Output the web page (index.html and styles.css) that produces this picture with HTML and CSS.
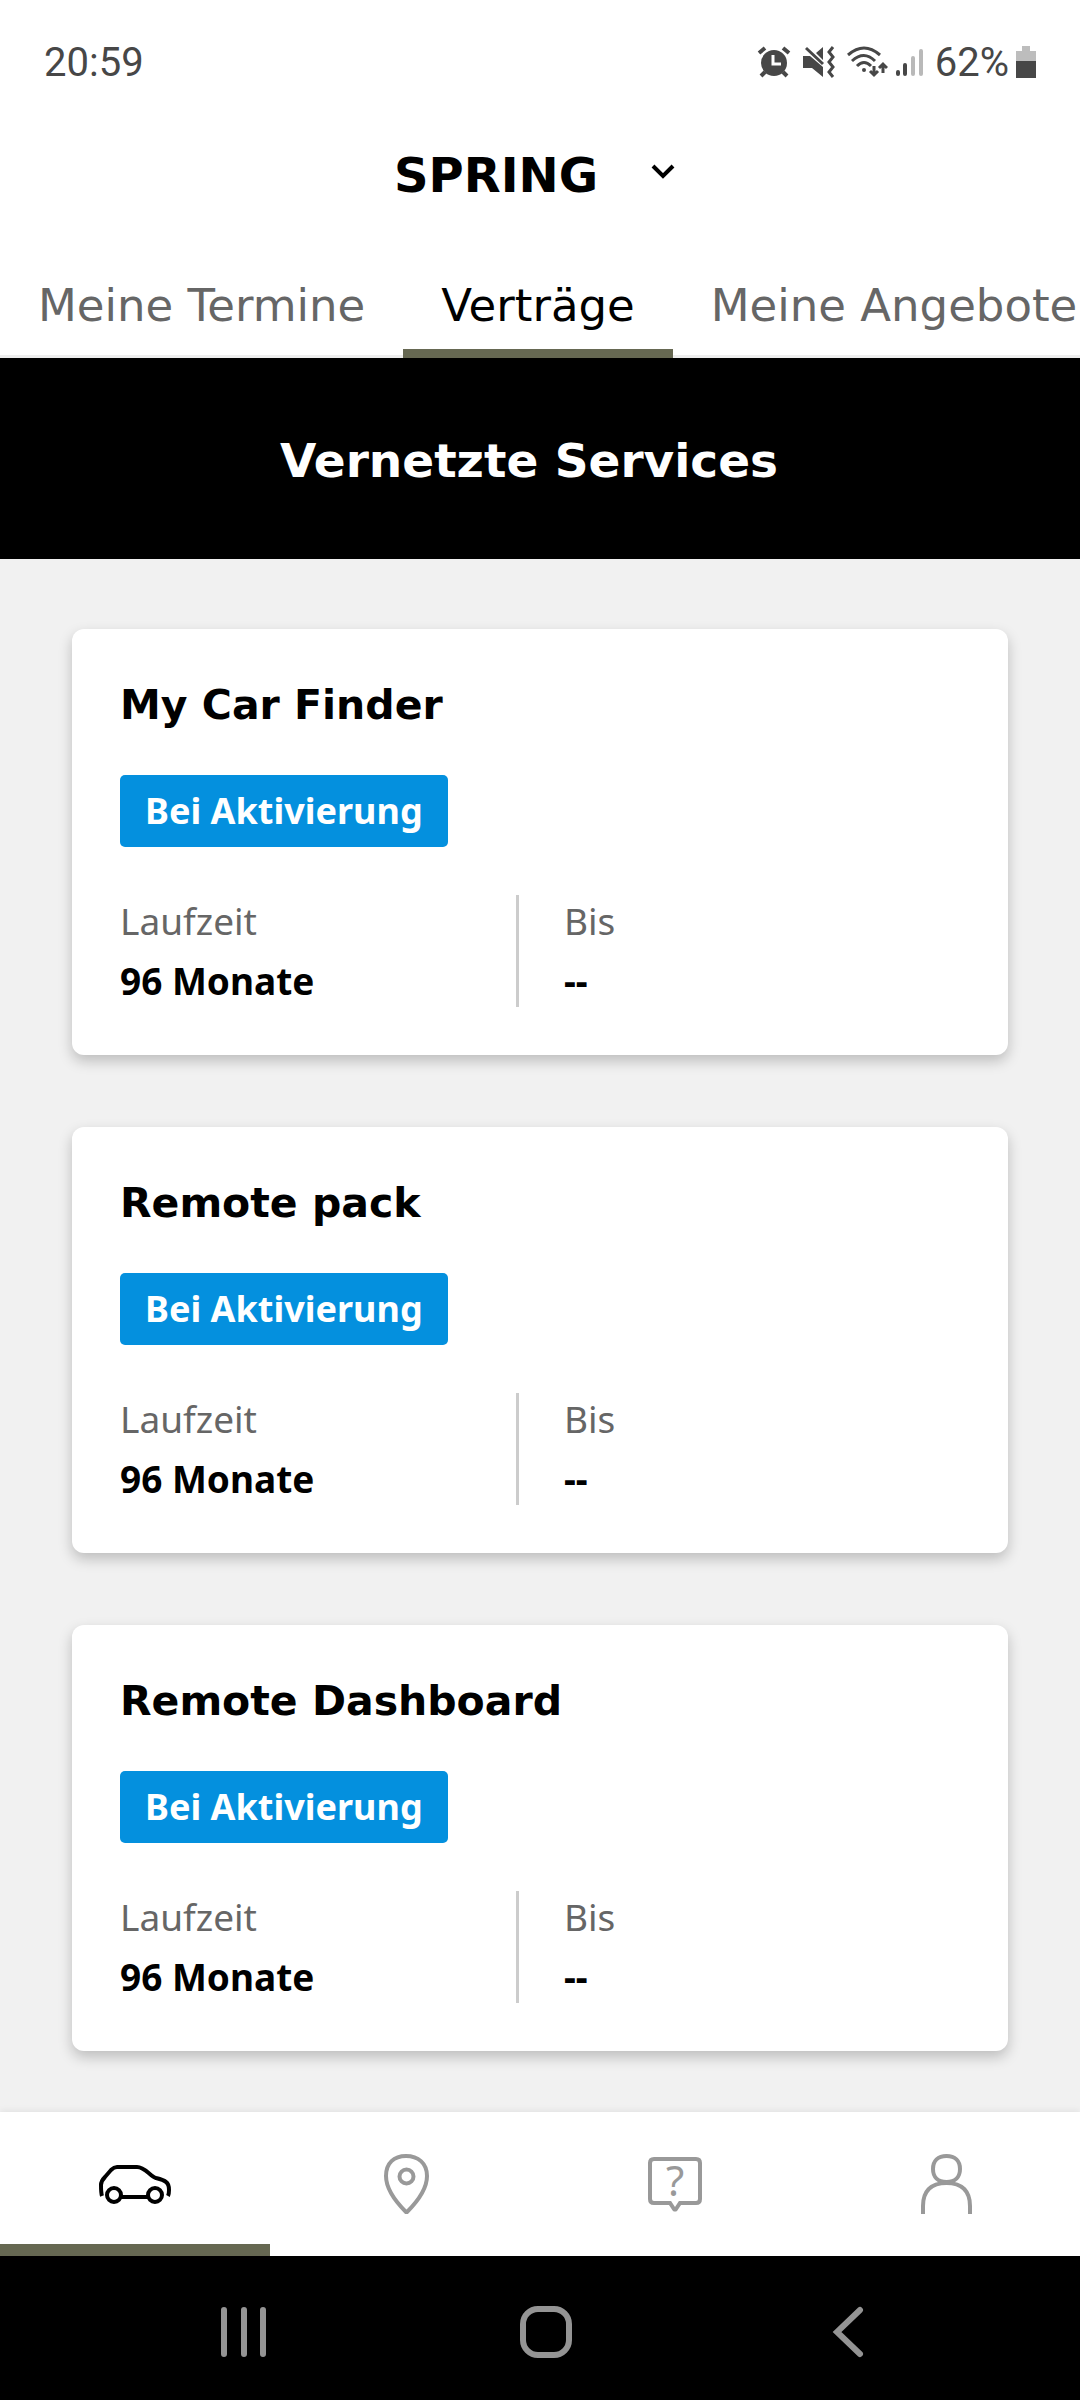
FILE: index.html
```html
<!DOCTYPE html>
<html lang="de">
<head>
    <meta charset="UTF-8">
    <meta name="viewport" content="width=device-width, initial-scale=1.0">
    <title>Verträge</title>
    <link rel="stylesheet" href="styles.css">
</head>
<body>
<div class="status-bar">
    <span>20:59</span>
    <div class="status-icons">
        <svg width="34" height="32" viewBox="0 0 34 32">
            <circle cx="17" cy="17" r="13" fill="#474747"/>
            <path d="M2 7L8 2M32 7L26 2M8 26L4 30M26 26L30 30" stroke="#474747" stroke-width="4" fill="none"/>
            <path d="M16 9V18H24" stroke="#fff" stroke-width="3" fill="none"/>
        </svg>
        <svg class="icon-spaced" width="32" height="32" viewBox="0 0 32 32">
            <path d="M0 10H7L20 21V31L9 22H0ZM13 7L20 1V14Z" fill="#474747"/>
            <path d="M3 2L20 18" stroke="#474747" stroke-width="3"/>
            <path d="M30 1L26 6L30 11L26 16L30 21L26 26L30 31" stroke="#474747" stroke-width="3" fill="none"/>
        </svg>
        <svg class="icon-spaced" width="41" height="32" viewBox="0 0 41 32">
            <path d="M1 9Q17 -5 33 9M5 15Q17 4 28 15M10 20Q17 13 24 20" stroke="#474747" stroke-width="3" fill="none"/>
            <circle cx="17" cy="24" r="2" fill="#474747"/>
            <path d="M27 20V29M23 25L27 29L31 25M36 27V18M32 22L36 18L40 22" stroke="#474747" stroke-width="3" fill="none"/>
        </svg>
        <svg width="28" height="32" viewBox="0 0 28 32" stroke-width="4" stroke-linecap="round">
            <path d="M3 26V28M10 19V28" stroke="#474747"/>
            <path d="M18 12V28M26 5V28" stroke="#b9b9b9"/>
        </svg>
        <span class="icon-spaced">62%</span>
        <svg width="20" height="32" viewBox="0 0 20 32">
            <path d="M6 0H14V5H20V16H0V5H6Z" fill="#bdbdbd"/>
            <path d="M0 15H20V32H0Z" fill="#474747"/>
        </svg>
    </div>
</div>

<header class="header">
    <button class="car-select" type="button">
        SPRING
        <svg width="26" height="26" viewBox="0 0 26 26">
            <path d="M3 4L13 14L23 4" stroke="#000" stroke-width="4" fill="none"/>
        </svg>
    </button>
</header>

<nav class="tabs">
    <a class="tab" href="#termine">Meine Termine</a>
    <a class="tab active" href="#vertraege">Verträge</a>
    <a class="tab" href="#angebote">Meine Angebote</a>
</nav>

<h1 class="banner">Vernetzte Services</h1>

<main class="services">
    <section class="card">
        <h2>My Car Finder</h2>
        <span class="badge">Bei Aktivierung</span>
        <dl class="details">
            <div class="detail">
                <dt>Laufzeit</dt>
                <dd>96 Monate</dd>
            </div>
            <div class="detail">
                <dt>Bis</dt>
                <dd>--</dd>
            </div>
        </dl>
    </section>
    <section class="card">
        <h2>Remote pack</h2>
        <span class="badge">Bei Aktivierung</span>
        <dl class="details">
            <div class="detail">
                <dt>Laufzeit</dt>
                <dd>96 Monate</dd>
            </div>
            <div class="detail">
                <dt>Bis</dt>
                <dd>--</dd>
            </div>
        </dl>
    </section>
    <section class="card">
        <h2>Remote Dashboard</h2>
        <span class="badge">Bei Aktivierung</span>
        <dl class="details">
            <div class="detail">
                <dt>Laufzeit</dt>
                <dd>96 Monate</dd>
            </div>
            <div class="detail">
                <dt>Bis</dt>
                <dd>--</dd>
            </div>
        </dl>
    </section>
</main>

<nav class="bottom-nav">
    <a class="nav-item active" href="#car" aria-label="Fahrzeug">
        <svg width="72" height="72" viewBox="0 0 72 72">
            <path d="M3 48C2 45 2 41 2 37C2 34 4 31 6 29L12 22C14 20 15 19 18 19H38C46 19 51 28 57 30C61 31 65 32 67 34C70 36 70 39 70 42C70 45 70 46 69 48"/>
            <circle cx="15" cy="47" r="7"/>
            <circle cx="56" cy="47" r="7"/>
            <path d="M22 49H49"/>
        </svg>
    </a>
    <a class="nav-item" href="#map" aria-label="Karte">
        <svg width="72" height="72" viewBox="0 0 72 72">
            <path d="M37 64C30 57 17 43 17 28C17 15 25 8 37 8S58 15 58 28C58 43 45 57 38 64Z"/>
            <circle cx="37.5" cy="28.5" r="7"/>
        </svg>
    </a>
    <a class="nav-item" href="#help" aria-label="Hilfe">
        <svg width="72" height="72" viewBox="0 0 72 72">
            <path d="M15 11H57Q61 11 61 15V51Q61 55 57 55H41L37 61Q36 62 35 61L31 55H15Q11 55 11 51V15Q11 11 15 11Z"/>
            <text class="nav-mark" x="36" y="48" text-anchor="middle">?</text>
        </svg>
    </a>
    <a class="nav-item" href="#profile" aria-label="Profil">
        <svg width="72" height="72" viewBox="0 0 72 72">
            <path d="M37.5 8C46 8 51 13 51 21C51 29 46 34 37.5 34S24 29 24 21C24 13 29 8 37.5 8Z"/>
            <path d="M14 66V58C14 44 21 35 37.5 35S61 44 61 58V66"/>
        </svg>
    </a>
</nav>

<div class="system-bar">
    <button type="button" aria-label="Letzte Apps">
        <svg width="52" height="52" viewBox="0 0 52 52">
            <path d="M6 4V48M26 4V48M45 4V48"/>
        </svg>
    </button>
    <button type="button" aria-label="Startseite">
        <svg width="52" height="52" viewBox="0 0 52 52">
            <rect x="3" y="3" width="46" height="46" rx="15"/>
        </svg>
    </button>
    <button type="button" aria-label="Zurück">
        <svg width="52" height="52" viewBox="0 0 52 52">
            <path d="M38 4L15 26L38 48"/>
        </svg>
    </button>
</div>
</body>
</html>
```
FILE: styles.css
```css
* {
    box-sizing: border-box;
}
body {
    margin: 0;
    min-height: 100vh;
    display: flex;
    flex-direction: column;
    font-family: "Noto Sans", "Open Sans", sans-serif;
    background-color: #f1f1f1;
    color: #000;
}
a {
    text-decoration: none;
}
button {
    padding: 0;
    border: none;
    background: none;
    cursor: pointer;
}
.status-bar {
    display: flex;
    justify-content: space-between;
    align-items: center;
    height: 124px;
    padding: 0 44px;
    background-color: #fff;
    color: #474747;
    font-family: Roboto, sans-serif;
    font-size: 40px;
}
.status-icons {
    display: flex;
    align-items: center;
    gap: 7px;
}
.icon-spaced {
    margin-left: 5px;
}
.header {
    display: flex;
    justify-content: center;
    padding: 19px 10px 21px 0;
    background-color: #fff;
}
.car-select {
    display: flex;
    align-items: center;
    gap: 52px;
    color: #000;
    font-family: "DejaVu Sans", sans-serif;
    font-size: 48px;
    font-weight: bold;
    line-height: 64px;
}
.tabs {
    display: flex;
    overflow: hidden;
    background-color: #fff;
    box-shadow: inset 0 -3px #eee;
}
.tab {
    flex: none;
    padding: 50px 38px 16px;
    border-bottom: 9px solid transparent;
    color: #666;
    font-family: "DejaVu Sans", sans-serif;
    font-size: 45px;
    line-height: 55px;
}
.tab.active {
    color: #000;
    border-bottom-color: #666852;
}
.banner {
    margin: 0;
    padding: 71px 22px 66px 0;
    background-color: #000;
    color: #fff;
    font-family: "DejaVu Sans", sans-serif;
    font-size: 47px;
    line-height: 64px;
    text-align: center;
}
.services {
    flex: 1;
    display: flex;
    flex-direction: column;
    gap: 72px;
    padding: 70px 72px 61px;
}
.card {
    padding: 48px;
    background-color: #fff;
    border-radius: 12px;
    box-shadow: 0 6px 14px rgba(0, 0, 0, 0.22);
}
.card h2 {
    margin: 0 0 42px;
    font-family: "DejaVu Sans", sans-serif;
    font-size: 41px;
    line-height: 56px;
}
.badge {
    display: inline-block;
    padding: 0 25px;
    background-color: #0490de;
    border-radius: 5px;
    color: #fff;
    font-size: 36px;
    font-weight: bold;
    line-height: 72px;
    vertical-align: top;
}
.details {
    display: flex;
    margin: 48px 0 0;
}
.detail {
    flex: 1;
    font-size: 37px;
    line-height: 52px;
}
.detail:first-child {
    flex: 0 0 47.5%;
    border-right: 3px solid #ccc;
}
.detail + .detail {
    padding-left: 45px;
}
.detail dt {
    color: #666;
}
.detail dd {
    margin: 8px 0 0;
    font-weight: bold;
}
.bottom-nav {
    display: flex;
    background-color: #fff;
    box-shadow: 0 -2px 6px rgba(0, 0, 0, 0.06);
}
.nav-item {
    flex: 1;
    display: flex;
    justify-content: center;
    padding: 36px 0 24px;
    border-bottom: 12px solid transparent;
}
.nav-item svg {
    fill: none;
    stroke: #999;
    stroke-width: 4;
}
.nav-item.active {
    border-bottom-color: #666852;
}
.nav-item.active svg {
    stroke: #000;
}
.nav-mark {
    fill: #999;
    stroke: none;
    font-size: 42px;
}
.system-bar {
    display: flex;
    padding: 50px 81px 42px 93px;
    background-color: #000;
}
.system-bar button {
    flex: 1;
    display: flex;
    justify-content: center;
}
.system-bar svg {
    fill: none;
    stroke: #949494;
    stroke-width: 6;
    stroke-linecap: round;
}
```
